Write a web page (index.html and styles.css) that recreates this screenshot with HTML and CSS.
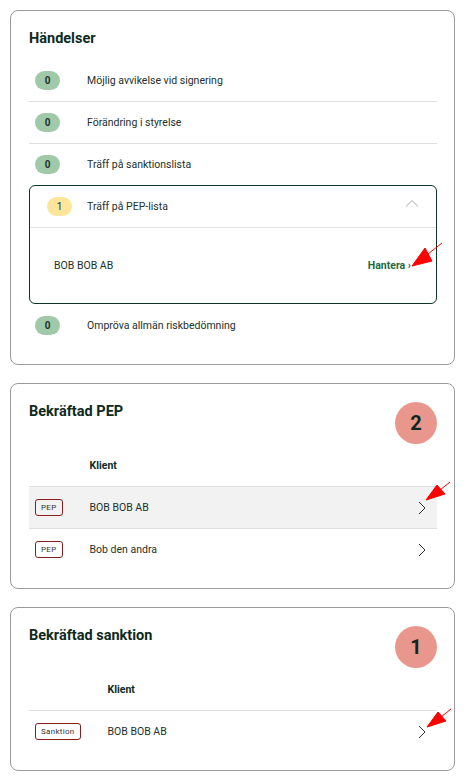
FILE: index.html
```html
<!DOCTYPE html>
<html lang="sv">
<head>
    <meta charset="UTF-8">
    <meta name="viewport" content="width=device-width, initial-scale=1.0">
    <title>Händelser</title>
    <link rel="stylesheet" href="styles.css">
</head>
<body>
    <section class="card">
        <h2 class="card-title">Händelser</h2>
        <ul class="events">
            <li class="event">
                <span class="count">0</span>
                <span class="event-label">Möjlig avvikelse vid signering</span>
            </li>
            <li class="event">
                <span class="count">0</span>
                <span class="event-label">Förändring i styrelse</span>
            </li>
            <li class="event no-line">
                <span class="count">0</span>
                <span class="event-label">Träff på sanktionslista</span>
            </li>
            <li class="event-open">
                <div class="event-head">
                    <span class="count count-warn">1</span>
                    <span class="event-label">Träff på PEP-lista</span>
                    <svg class="chev-up" width="14" height="8" viewBox="0 0 14 8">
                        <path d="M1 7.5 L7 1.5 L13 7.5" fill="none" stroke="#c9cccb" stroke-width="1.2"/>
                    </svg>
                </div>
                <div class="event-body">
                    <span>BOB BOB AB</span>
                    <a class="handle-link" href="#">Hantera ›</a>
                </div>
            </li>
            <li class="event no-line last">
                <span class="count">0</span>
                <span class="event-label">Ompröva allmän riskbedömning</span>
            </li>
        </ul>
    </section>

    <section class="card">
        <div class="card-head">
            <h2 class="card-title">Bekräftad PEP</h2>
            <span class="total">2</span>
        </div>
        <table class="clients">
            <thead>
                <tr>
                    <th></th>
                    <th>Klient</th>
                    <th></th>
                </tr>
            </thead>
            <tbody>
                <tr class="active">
                    <td class="tag-cell"><span class="tag">PEP</span></td>
                    <td>BOB BOB AB</td>
                    <td class="go-cell"><svg width="8" height="14" viewBox="0 0 8 14"><path d="M1 1 L7 7 L1 13" fill="none" stroke="#333" stroke-width="1"/></svg></td>
                </tr>
                <tr>
                    <td class="tag-cell"><span class="tag">PEP</span></td>
                    <td>Bob den andra</td>
                    <td class="go-cell"><svg width="8" height="14" viewBox="0 0 8 14"><path d="M1 1 L7 7 L1 13" fill="none" stroke="#333" stroke-width="1"/></svg></td>
                </tr>
            </tbody>
        </table>
    </section>

    <section class="card">
        <div class="card-head">
            <h2 class="card-title">Bekräftad sanktion</h2>
            <span class="total">1</span>
        </div>
        <table class="clients">
            <thead>
                <tr>
                    <th></th>
                    <th>Klient</th>
                    <th></th>
                </tr>
            </thead>
            <tbody>
                <tr>
                    <td class="tag-cell"><span class="tag">Sanktion</span></td>
                    <td>BOB BOB AB</td>
                    <td class="go-cell"><svg width="8" height="14" viewBox="0 0 8 14"><path d="M1 1 L7 7 L1 13" fill="none" stroke="#333" stroke-width="1"/></svg></td>
                </tr>
            </tbody>
        </table>
    </section>

    <!-- red pointer annotations -->
    <svg class="marks" width="468" height="777" viewBox="0 0 468 777">
        <g stroke="#ff0000" stroke-width="1" fill="#ff0000">
            <line x1="442" y1="243" x2="428" y2="254"/>
            <polygon points="412,266 425,248 432,261"/>
            <line x1="450" y1="482" x2="440" y2="490"/>
            <polygon points="426,500 437,485 445,494"/>
            <line x1="451" y1="709" x2="441" y2="717"/>
            <polygon points="427,727 438,712 446,721"/>
        </g>
    </svg>
</body>
</html>
```

FILE: styles.css
```css
body {
    font-family: Roboto, "Noto Sans", sans-serif;
    font-size: 10.5px;
    color: #22302b;
    background-color: #fff;
    margin: 0;
    padding: 10px 13px 10px 10px;
    position: relative;
}
.card {
    border: 1px solid #9a9a9a;
    border-radius: 8px;
    padding: 18px 17px 18px 18px;
    margin-bottom: 18px;
}
.card-title {
    margin: 0;
    font-size: 14.5px;
    line-height: 20px;
    font-weight: 700;
    color: #0e2a20;
}
.card-head {
    display: flex;
    justify-content: space-between;
    align-items: flex-start;
}
.total {
    width: 42px;
    height: 42px;
    border-radius: 50%;
    background-color: #e9978c;
    color: #0e2a20;
    font-size: 20px;
    font-weight: 700;
    display: flex;
    align-items: center;
    justify-content: center;
}

/* events list */
.events {
    list-style: none;
    margin: 11px 0 0;
    padding: 0;
}
.event {
    height: 41px;
    display: flex;
    align-items: center;
    padding-left: 6px;
    border-bottom: 1px solid #dedede;
}
.event.no-line {
    border-bottom: none;
}
.event.last {
    height: 42px;
}
.count {
    width: 25px;
    height: 19px;
    border-radius: 10px;
    background-color: #a0c9aa;
    font-size: 10px;
    font-weight: 700;
    display: flex;
    align-items: center;
    justify-content: center;
    flex-shrink: 0;
}
.count-warn {
    background-color: #fde59b;
    font-weight: 400;
}
.event-label {
    margin-left: 27px;
}
.event-open {
    border: 1px solid #0f3526;
    border-radius: 6px;
}
.event-head {
    height: 41px;
    display: flex;
    align-items: center;
    padding: 0 17px;
    border-bottom: 1px solid #e2e2e2;
}
.event-head .event-label {
    margin-left: 15px;
    flex: 1;
}
.chev-up {
    margin-top: -8px;
}
.event-body {
    height: 75px;
    display: flex;
    align-items: center;
    justify-content: space-between;
    padding: 0 25px 0 24px;
}
.handle-link {
    color: #1d6b3c;
    font-weight: 700;
    text-decoration: none;
}

/* client tables */
.clients {
    width: 100%;
    border-collapse: collapse;
}
.clients th {
    height: 42px;
    text-align: left;
    font-weight: 700;
    color: #0e2a20;
    padding: 0;
}
.clients td {
    height: 41px;
    padding: 0;
    border-top: 1px solid #dedede;
}
.clients tr.active td {
    background-color: #f1f2f1;
}
.clients td.tag-cell {
    width: 1px;
    padding: 0 27px 0 6px;
}
.tag {
    display: inline-block;
    border: 1px solid #8a1c1c;
    border-radius: 3px;
    font-size: 8px;
    line-height: 15px;
    letter-spacing: 0.3px;
    padding: 0 5px;
    color: #333;
}
.clients td.go-cell {
    width: 20px;
    text-align: right;
    padding-right: 11px;
}
.go-cell svg {
    display: block;
    margin-left: auto;
}
.marks {
    position: absolute;
    top: 0;
    left: 0;
    pointer-events: none;
}
```
